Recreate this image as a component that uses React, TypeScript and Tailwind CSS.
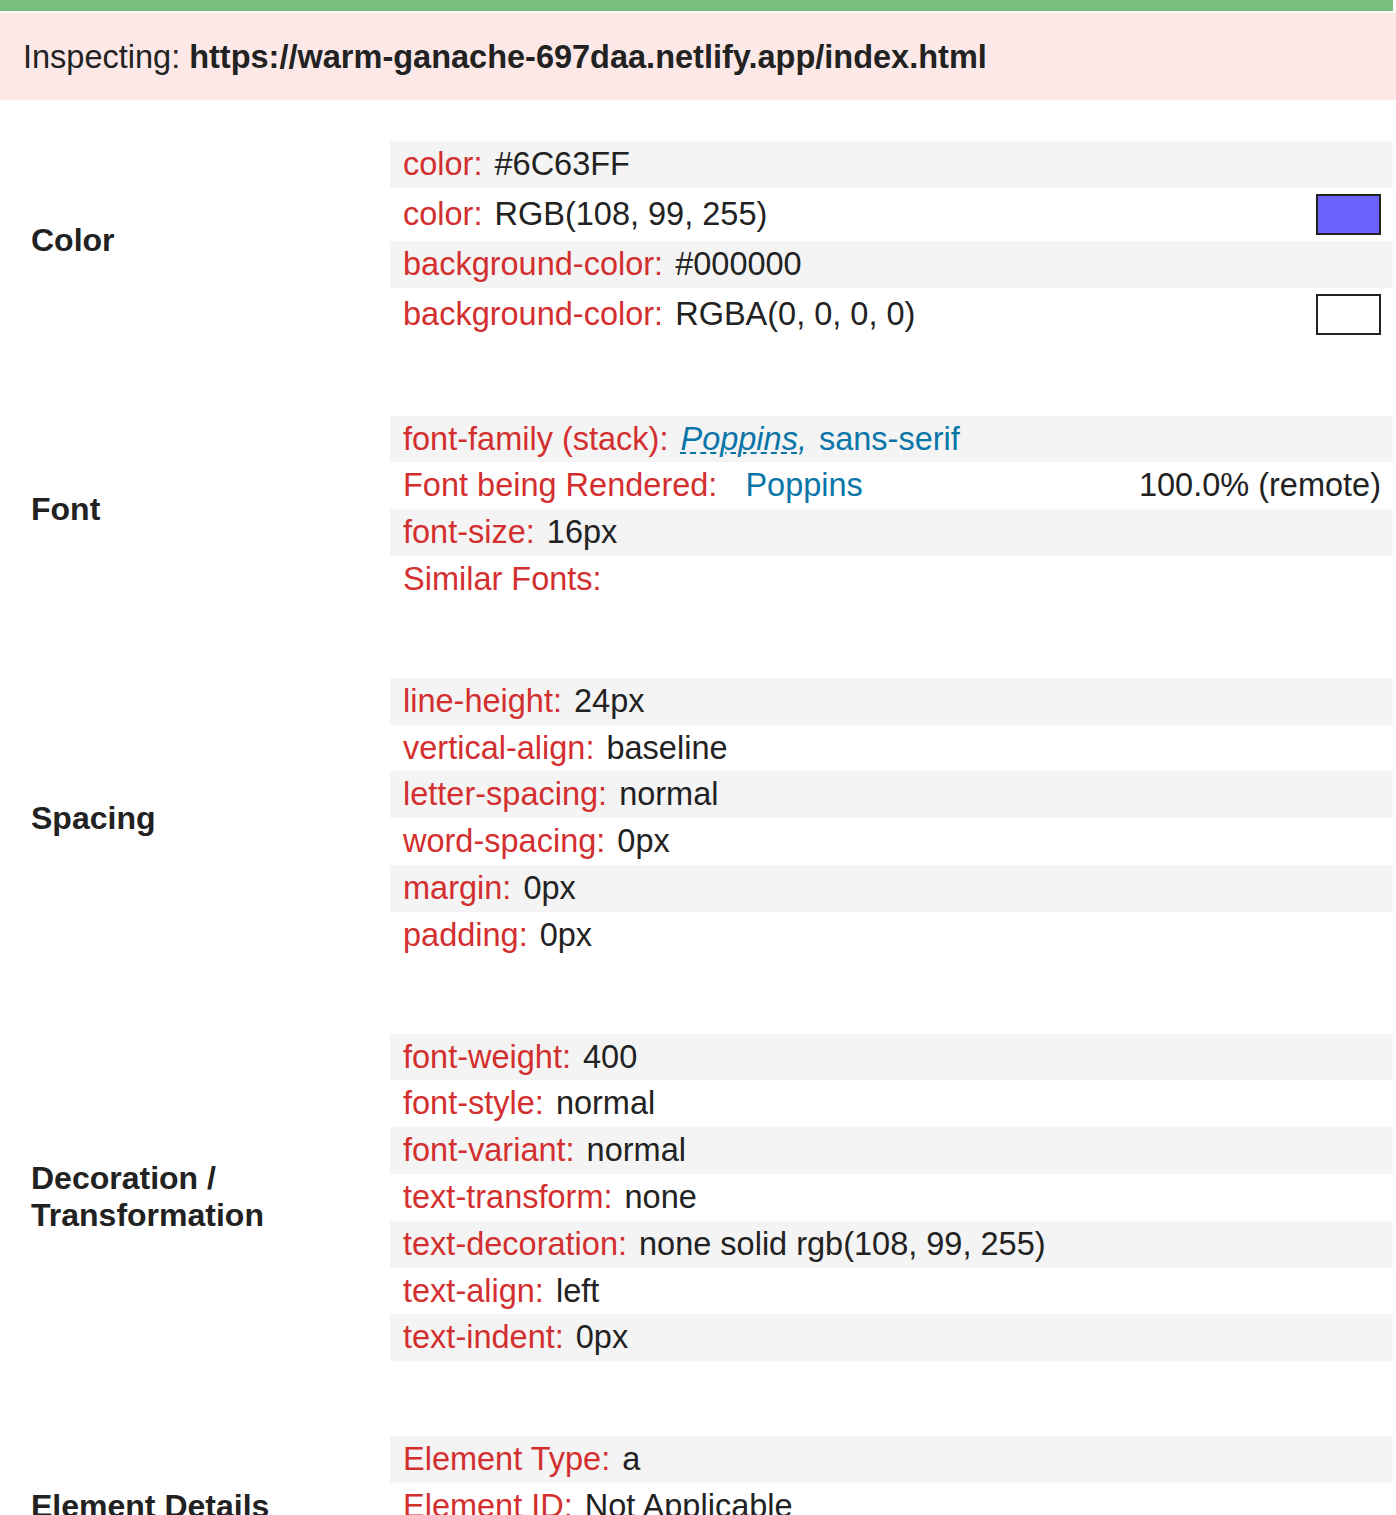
import React from "react";

type Row = { k: React.ReactNode; v?: React.ReactNode; right?: React.ReactNode; swatch?: string };

const K = ({ children }: { children: React.ReactNode }) => (
  <span className="text-[#d32f2f]">{children}</span>
);

function Section({ label, rows }: { label: React.ReactNode; rows: Row[] }) {
  return (
    <div className="flex items-center">
      <div className="w-[390px] shrink-0 pl-[31px] text-[32px] font-bold leading-[37px] text-[#222]">{label}</div>
      <div className="flex-1 flex flex-col">
        {rows.map((r, i) => (
          <div
            key={i}
            className={`flex items-center pl-[13px] pr-[12px] ${r.swatch ? "py-[6px]" : "py-[5px]"} ${i % 2 === 0 ? "bg-[#f4f4f4]" : "bg-white"}`}
          >
            <div className="flex-1 text-[32.5px] leading-[36.8px] whitespace-nowrap text-[#222]">
              <K>{r.k}</K>
              {r.v !== undefined && <span className="ml-[12px]">{r.v}</span>}
            </div>
            {r.right && <div className="text-[32.5px] leading-[36.8px] text-[#222]">{r.right}</div>}
            {r.swatch && (
              <div className="w-[65px] h-[41px] border-2 border-[#222]" style={{ background: r.swatch }} />
            )}
          </div>
        ))}
      </div>
    </div>
  );
}

export default function App() {
  return (
    <div className="min-h-[1515px] bg-white pr-[3px] overflow-hidden" style={{ fontFamily: '"Liberation Sans", Arial, sans-serif' }}>
      <div className="h-[11px] bg-[#7bbd7d]" />
      <div className="h-[2px] bg-white" />
      <div className="h-[87px] bg-[#fde8e8] -mr-[3px] flex items-center pl-[23px] pt-[2px] text-[32.5px] text-[#222]">
        <span>Inspecting:</span>
        <span className="ml-[9px] font-bold">https://warm-ganache-697daa.netlify.app/index.html</span>
      </div>
      <div className="pt-[41px] flex flex-col gap-[75px]">
        <Section
          label="Color"
          rows={[
            { k: "color:", v: "#6C63FF" },
            { k: "color:", v: "RGB(108, 99, 255)", swatch: "#6c63ff" },
            { k: "background-color:", v: "#000000" },
            { k: "background-color:", v: "RGBA(0, 0, 0, 0)", swatch: "#ffffff" },
          ]}
        />
        <Section
          label="Font"
          rows={[
            {
              k: "font-family (stack):",
              v: (
                <span className="text-[#0a76a8]">
                  <span className="italic underline decoration-dashed decoration-2 underline-offset-[3px]">Poppins</span>
                  <span className="italic">,</span>
                  <span className="ml-[12px]">sans-serif</span>
                </span>
              ),
            },
            {
              k: "Font being Rendered:",
              v: <span className="ml-[16px] text-[#0a76a8]">Poppins</span>,
              right: "100.0% (remote)",
            },
            { k: "font-size:", v: "16px" },
            { k: "Similar Fonts:" },
          ]}
        />
        <Section
          label="Spacing"
          rows={[
            { k: "line-height:", v: "24px" },
            { k: "vertical-align:", v: "baseline" },
            { k: "letter-spacing:", v: "normal" },
            { k: "word-spacing:", v: "0px" },
            { k: "margin:", v: "0px" },
            { k: "padding:", v: "0px" },
          ]}
        />
        <Section
          label={<>Decoration /<br />Transformation</>}
          rows={[
            { k: "font-weight:", v: "400" },
            { k: "font-style:", v: "normal" },
            { k: "font-variant:", v: "normal" },
            { k: "text-transform:", v: "none" },
            { k: "text-decoration:", v: "none solid rgb(108, 99, 255)" },
            { k: "text-align:", v: "left" },
            { k: "text-indent:", v: "0px" },
          ]}
        />
        <Section
          label="Element Details"
          rows={[
            { k: "Element Type:", v: "a" },
            { k: "Element ID:", v: "Not Applicable" },
            { k: "Element Class:", v: "Not Applicable" },
          ]}
        />
      </div>
    </div>
  );
}
